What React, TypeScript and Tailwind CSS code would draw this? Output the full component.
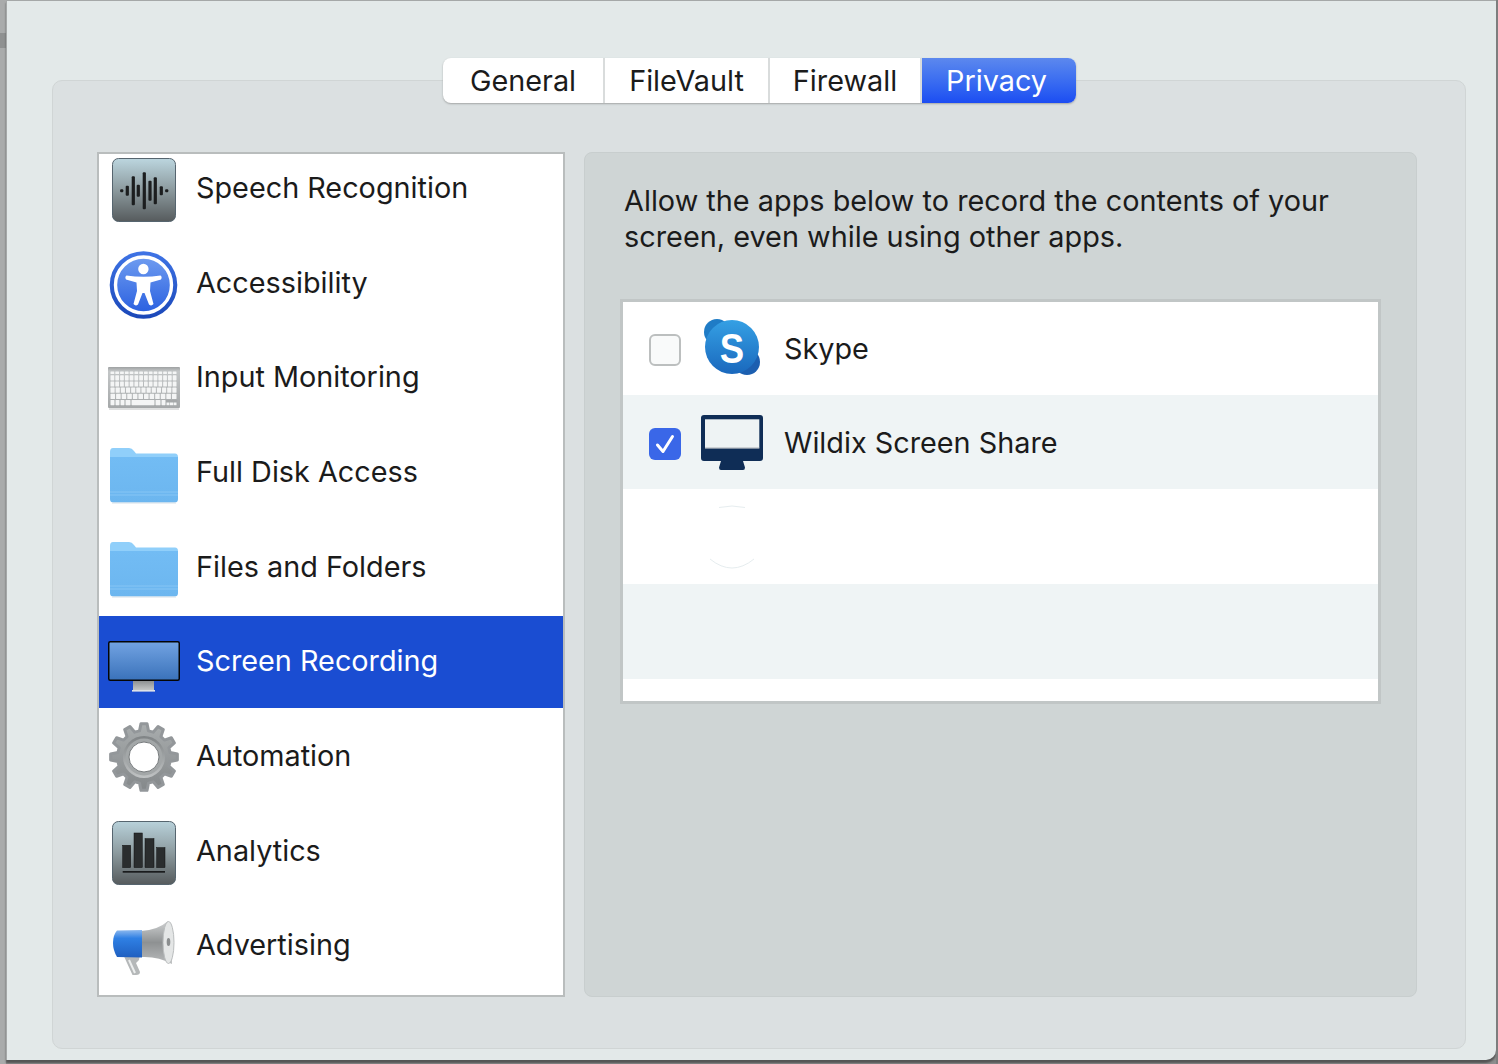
const gearTeeth = () => {
  const pts: string[] = [];
  const cx = 36;
  const cy = 36;
  for (let i = 0; i < 12; i++) {
    const a = (i * Math.PI * 2) / 12 - Math.PI / 2;
    const p = (r: number, d: number) =>
      `${(cx + r * Math.cos(a + d)).toFixed(2)},${(cy + r * Math.sin(a + d)).toFixed(2)}`;
    pts.push(p(26.5, -0.17), p(33.5, -0.09), p(33.5, 0.09), p(26.5, 0.17));
  }
  return pts.join(' ');
};

const SpeechIcon = () => (
  <svg width="72" height="72" viewBox="0 0 72 72">
    <defs>
      <linearGradient id="tile1" x1="0" y1="0" x2="0" y2="1">
        <stop offset="0" stopColor="#bcd6df" />
        <stop offset="0.5" stopColor="#8c9a9e" />
        <stop offset="1" stopColor="#565b5d" />
      </linearGradient>
    </defs>
    <rect x="4.5" y="5.5" width="63" height="63" rx="6" fill="url(#tile1)" stroke="#56656f" />
    {[
      [13.7, 3], [19.3, 10], [25.3, 29], [30.3, 12], [36.3, 37], [42, 20], [47.3, 27], [53.3, 9], [58.7, 3],
    ].map(([x, h]) => (
      <rect key={x} x={x - 1.6} y={37.7 - h / 2} width="3.2" height={h} rx="1" fill="#1c1e1f" />
    ))}
  </svg>
);

const AccessibilityIcon = () => (
  <svg width="72" height="72" viewBox="0 0 72 72">
    <defs>
      <linearGradient id="acc1" x1="0" y1="0" x2="0" y2="1">
        <stop offset="0" stopColor="#3f74e6" />
        <stop offset="1" stopColor="#1a47b8" />
      </linearGradient>
      <linearGradient id="acc2" x1="0" y1="0" x2="0" y2="1">
        <stop offset="0" stopColor="#6f9cf0" />
        <stop offset="1" stopColor="#2a60e0" />
      </linearGradient>
    </defs>
    <circle cx="35.5" cy="37" r="33.8" fill="url(#acc1)" />
    <circle cx="35.5" cy="37" r="28" fill="url(#acc2)" stroke="#fff" strokeWidth="3.4" />
    <circle cx="35.4" cy="21" r="5.2" fill="#fff" />
    <path
      d="M18.5 27.5 Q35.5 30 52.5 27.5 Q54.5 29 53 31.5 L42.5 34.5 L42 43 L45.5 56 Q43.5 58.5 41 56.5 L36.5 45 L34.5 45 L30 56.5 Q27.5 58.5 25.5 56 L29 43 L28.5 34.5 L18 31.5 Q16.5 29 18.5 27.5 Z"
      fill="#fff"
    />
  </svg>
);

const keyboardRows = [
  { y: 29.5, h: 2.6, keys: 14 },
  { y: 33.2, h: 5.2, keys: 14 },
  { y: 39.4, h: 5.2, keys: 14 },
  { y: 45.6, h: 5.2, keys: 13 },
  { y: 51.8, h: 5.2, keys: 12 },
];

const KeyboardIcon = () => (
  <svg width="72" height="72" viewBox="0 0 72 72">
    <defs>
      <linearGradient id="kb1" x1="0" y1="0" x2="0" y2="1">
        <stop offset="0" stopColor="#9ea1a2" />
        <stop offset="0.1" stopColor="#c3c6c7" />
        <stop offset="1" stopColor="#a5a8a9" />
      </linearGradient>
    </defs>
    <rect x="0" y="25" width="72" height="41" rx="1" fill="url(#kb1)" />
    <rect x="1" y="66" width="70" height="2" fill="#dfe0e0" />
    {keyboardRows.map((row) =>
      Array.from({ length: row.keys }).map((_, col) => {
        const w = 67 / row.keys;
        return (
          <rect
            key={`${row.y}-${col}`}
            x={2.5 + col * w}
            y={row.y}
            width={w - 1}
            height={row.h}
            rx="0.6"
            fill="#f4f5f5"
          />
        );
      })
    )}
    <rect x="2.5" y="58" width="67" height="5.2" rx="0.6" fill="#a5a8a9" />
    <rect x="2.5" y="58" width="4" height="5.2" rx="0.6" fill="#f4f5f5" />
    <rect x="7.5" y="58" width="4" height="5.2" rx="0.6" fill="#f4f5f5" />
    <rect x="12.5" y="58" width="4" height="5.2" rx="0.6" fill="#f4f5f5" />
    <rect x="17.5" y="58" width="5" height="5.2" rx="0.6" fill="#f4f5f5" />
    <rect x="23.5" y="58" width="23" height="5.2" rx="0.6" fill="#f4f5f5" />
    <rect x="47.5" y="58" width="5" height="5.2" rx="0.6" fill="#f4f5f5" />
    <rect x="53.5" y="58" width="4" height="5.2" rx="0.6" fill="#f4f5f5" />
    <rect x="58.5" y="60.5" width="3" height="2.7" fill="#f4f5f5" />
    <rect x="62" y="60.5" width="3" height="2.7" fill="#f4f5f5" />
    <rect x="65.5" y="60.5" width="3" height="2.7" fill="#f4f5f5" />
  </svg>
);

const FolderIcon = ({ id, top }: { id: string; top: number }) => (
  <svg width="72" height="72" viewBox="0 0 72 72">
    <defs>
      <linearGradient id={id} x1="0" y1="0" x2="0" y2="1">
        <stop offset="0" stopColor="#72bcf4" />
        <stop offset="1" stopColor="#6cb6ef" />
      </linearGradient>
    </defs>
    <g transform={`translate(0 ${top})`}>
      <path
        d="M2 4 Q2 0 5 0 L21 0 Q24 0 26 3 L28 5.5 L67 5.5 Q70 5.5 70 9 L70 20 L2 20 Z"
        fill="#90cffa"
      />
      <path
        d="M2 9 L70 9 L70 51 Q70 54.5 66.5 54.5 L5.5 54.5 Q2 54.5 2 51 Z"
        fill={`url(#${id})`}
      />
      <path d="M2 44 H70 M2 47 H70" stroke="#86c5f5" strokeWidth="1" />
      <rect x="4" y="54.5" width="64" height="1" fill="#d5dfe7" />
    </g>
  </svg>
);

const MonitorIcon = () => (
  <svg width="72" height="72" viewBox="0 0 72 72">
    <defs>
      <linearGradient id="mon1" x1="0" y1="0" x2="0" y2="1">
        <stop offset="0" stopColor="#72a3e2" />
        <stop offset="1" stopColor="#3a72ba" />
      </linearGradient>
      <linearGradient id="mon2" x1="0" y1="0" x2="0" y2="1">
        <stop offset="0" stopColor="#8d9091" />
        <stop offset="1" stopColor="#c4c6c6" />
      </linearGradient>
    </defs>
    <rect x="0.75" y="15.75" width="70.5" height="38.5" rx="1.5" fill="url(#mon1)" stroke="#050505" strokeWidth="1.5" />
    <rect x="25" y="55" width="21" height="9" fill="url(#mon2)" />
    <rect x="24" y="64" width="23" height="1.6" fill="#dfe2e6" />
  </svg>
);

const GearIcon = () => (
  <svg width="72" height="72" viewBox="0 0 72 72">
    <defs>
      <linearGradient id="gear1" x1="0" y1="0" x2="0" y2="1">
        <stop offset="0" stopColor="#a9adae" />
        <stop offset="1" stopColor="#84888a" />
      </linearGradient>
      <linearGradient id="gear2" x1="0" y1="0" x2="0" y2="1">
        <stop offset="0" stopColor="#7f8385" />
        <stop offset="1" stopColor="#c0c3c4" />
      </linearGradient>
    </defs>
    <polygon points={gearTeeth()} fill="url(#gear1)" strokeLinejoin="round" stroke="#93979a" strokeWidth="3" />
    <circle cx="36" cy="36" r="21" fill="url(#gear2)" />
    <circle cx="36" cy="36" r="18.5" fill="#a3a7a8" />
    <circle cx="36" cy="36" r="15" fill="#fff" stroke="#777b7d" strokeWidth="1" />
  </svg>
);

const AnalyticsIcon = () => (
  <svg width="72" height="72" viewBox="0 0 72 72">
    <defs>
      <linearGradient id="tile2" x1="0" y1="0" x2="0" y2="1">
        <stop offset="0" stopColor="#b8d1da" />
        <stop offset="0.5" stopColor="#8c9a9e" />
        <stop offset="1" stopColor="#565b5d" />
      </linearGradient>
    </defs>
    <rect x="4.5" y="5.5" width="63" height="63" rx="6" fill="url(#tile2)" stroke="#56656f" />
    <rect x="14.7" y="29.3" width="8" height="22.3" fill="#2a2d2e" stroke="#111" strokeWidth="0.5" />
    <rect x="26" y="17" width="8.3" height="34.6" fill="#2a2d2e" stroke="#111" strokeWidth="0.5" />
    <rect x="37" y="22.6" width="9" height="29" fill="#2a2d2e" stroke="#111" strokeWidth="0.5" />
    <rect x="48.7" y="31.6" width="8.3" height="20" fill="#2a2d2e" stroke="#111" strokeWidth="0.5" />
    <rect x="14.7" y="55" width="42.3" height="1.7" fill="#1a1c1d" />
  </svg>
);

const MegaphoneIcon = () => (
  <svg width="72" height="72" viewBox="0 0 72 72">
    <defs>
      <linearGradient id="meg1" x1="0" y1="0" x2="0" y2="1">
        <stop offset="0" stopColor="#8cb8ee" />
        <stop offset="0.3" stopColor="#2f80e4" />
        <stop offset="1" stopColor="#1f5fc0" />
      </linearGradient>
      <linearGradient id="meg2" x1="0" y1="0" x2="0" y2="1">
        <stop offset="0" stopColor="#cfd1d2" />
        <stop offset="0.5" stopColor="#8e9192" />
        <stop offset="1" stopColor="#b9bbbc" />
      </linearGradient>
    </defs>
    <path d="M15 44 L32 44 L31 50 L28 53 L32 62 Q32 65 28 65 L24.5 65 L19 53 Z" fill="#b5b8b9" />
    <path d="M21 50 L27 63" fill="none" stroke="#eceeee" strokeWidth="2" />
    <path d="M33 21 Q50 20 60 11 L64 54 Q50 46 33 47 Z" fill="url(#meg2)" />
    <path d="M9 20.5 L34 20 L34 47.5 L9 47 Q5 40 5 33 Q5 25 9 20.5 Z" fill="url(#meg1)" />
    <ellipse cx="60.5" cy="32.5" rx="5.5" ry="21" fill="#e4e6e6" stroke="#babdbe" />
    <ellipse cx="60.5" cy="32" rx="1.8" ry="4" fill="#8b8e8f" />
  </svg>
);

const SkypeIcon = () => (
  <svg width="64" height="64" viewBox="0 0 64 64">
    <defs>
      <linearGradient id="sky1" x1="0" y1="0" x2="0" y2="1">
        <stop offset="0" stopColor="#35a0e4" />
        <stop offset="1" stopColor="#1a68bd" />
      </linearGradient>
    </defs>
    <circle cx="17" cy="15" r="13" fill="#1f7cc6" />
    <circle cx="47" cy="45" r="13" fill="#1c5fb0" />
    <circle cx="32" cy="30" r="27" fill="url(#sky1)" />
    <text
      transform="translate(32 45.5) scale(0.85 1)"
      textAnchor="middle"
      fontSize="43"
      fontWeight="700"
      fill="#fff"
      fontFamily="'Liberation Sans', sans-serif"
    >
      S
    </text>
  </svg>
);

const WildixIcon = () => (
  <svg width="64" height="64" viewBox="0 0 64 64">
    <path
      d="M4 5 H60 Q63 5 63 8 V48 Q63 51 60 51 H43 L45 57.5 Q45 60 43 60 H21 Q19 60 19 57.5 L21 51 H4 Q1 51 1 48 V8 Q1 5 4 5 Z"
      fill="#0f2d56"
    />
    <rect x="5" y="9.3" width="54.3" height="29" fill="#eef3f4" />
    <rect x="5" y="37.5" width="54.3" height="1" fill="#a9b0b5" />
  </svg>
);

const privacyRows = [
  { label: 'Speech Recognition', icon: <SpeechIcon /> },
  { label: 'Accessibility', icon: <AccessibilityIcon /> },
  { label: 'Input Monitoring', icon: <KeyboardIcon /> },
  { label: 'Full Disk Access', icon: <FolderIcon id="fold1" top={11} /> },
  { label: 'Files and Folders', icon: <FolderIcon id="fold2" top={10} /> },
  { label: 'Screen Recording', icon: <MonitorIcon />, active: true },
  { label: 'Automation', icon: <GearIcon /> },
  { label: 'Analytics', icon: <AnalyticsIcon /> },
  { label: 'Advertising', icon: <MegaphoneIcon /> },
];

const tabs = [
  { label: 'General', width: 'w-[162px]' },
  { label: 'FileVault', width: 'w-[165px]' },
  { label: 'Firewall', width: 'w-[152px]' },
];

export default function App() {
  return (
    <div className="flex h-[1064px] w-[1498px] overflow-hidden bg-[#8d8e8e] font-['Inter','Noto_Sans',sans-serif] text-[#1b1b1b]">
      <div className="h-full w-[6px] bg-[#a9abab] pt-[33px]">
        <div className="h-[15px] bg-[#8f9191]" />
      </div>
      <div className="flex h-[1060px] w-[1490px] flex-col rounded-br-[10px] border-t border-l border-[#a5a8a8] bg-[#e3e9e9] pt-[57px] shadow-[0_3px_2px_#555]">
        <div className="relative z-10 ml-[436px] flex h-[45px] w-[633px] overflow-hidden rounded-lg bg-white text-[28.8px] shadow-[0_1px_2px_#a3a6a6]">
          {tabs.map((tab) => (
            <div key={tab.label} className={`flex items-center justify-center border-r-2 border-[#d9dcdc] ${tab.width}`}>
              {tab.label}
            </div>
          ))}
          <div className="flex flex-1 items-center justify-center bg-gradient-to-b from-[#5c88ee] to-[#1c4cf2] pr-[5px] text-white">
            Privacy
          </div>
        </div>
        <div className="-mt-[23px] ml-[45px] flex h-[969px] w-[1414px] gap-[19px] rounded-[10px] border border-[#d0d5d5] bg-[#dbe0e1] pl-[44px] pt-[71px]">
          <div className="h-[845px] w-[468px] overflow-hidden border-2 border-[#b9bdbd] bg-white">
            <div className="-mt-[11px] flex flex-col gap-[2.67px]">
              {privacyRows.map((row) => (
                <div
                  key={row.label}
                  className={`flex h-[92px] shrink-0 items-center gap-4 pl-[9px] text-[28.8px] ${row.active ? 'bg-[#1a4dd2] text-white' : ''}`}
                >
                  <div className="flex h-[72px] w-[72px] shrink-0">{row.icon}</div>
                  <span className="-mt-[3px]">{row.label}</span>
                </div>
              ))}
            </div>
          </div>
          <div className="h-[845px] w-[833px] rounded-lg border border-[#c8cece] bg-[#cfd5d5] pl-[35px] pt-[30px]">
            <p className="ml-[4px] text-[28.85px] leading-[36px]">
              Allow the apps below to record the contents of your
              <br />
              screen, even while using other apps.
            </p>
            <div className="mt-[44px] flex h-[405px] w-[761px] flex-col border-[3px] border-[#c1c6c6] bg-white text-[28.8px]">
              <div className="flex h-[93px] items-center pl-[26px]">
                <div className="mt-[2px] h-[32px] w-[32px] rounded-[6px] border-2 border-[#bcbfbf] bg-[#f9fafa]" />
                <div className="ml-[19px] flex h-[64px] w-[64px]">
                  <SkypeIcon />
                </div>
                <span className="ml-[20px]">Skype</span>
              </div>
              <div className="flex h-[94px] items-center bg-[#eff4f5] pl-[26px]">
                <div className="mt-[4px] flex h-[32px] w-[32px] items-center justify-center rounded-[6px] bg-[#3a67e8]">
                  <svg width="22" height="22" viewBox="0 0 22 22" fill="none">
                    <path d="M3.5 12 L9 18.5 L18.5 3.5" stroke="#fff" strokeWidth="3" strokeLinecap="round" strokeLinejoin="round" />
                  </svg>
                </div>
                <div className="ml-[19px] flex h-[64px] w-[64px]">
                  <WildixIcon />
                </div>
                <span className="ml-[20px] mt-[2px]">Wildix Screen Share</span>
              </div>
              <div className="flex h-[95px] items-center pl-[77px]">
                <svg width="64" height="64" viewBox="0 0 64 64" fill="none" stroke="#e6edef" strokeWidth="1">
                  <path d="M19 2.5 Q32 -0.5 45 2.5" />
                  <path d="M10 54 Q32 72 54 54" />
                </svg>
              </div>
              <div className="h-[95px] bg-[#eff4f5]" />
              <div className="flex-1" />
            </div>
          </div>
        </div>
      </div>
      <div className="h-full w-[2px] bg-[#7d7e7e]" />
    </div>
  );
}
